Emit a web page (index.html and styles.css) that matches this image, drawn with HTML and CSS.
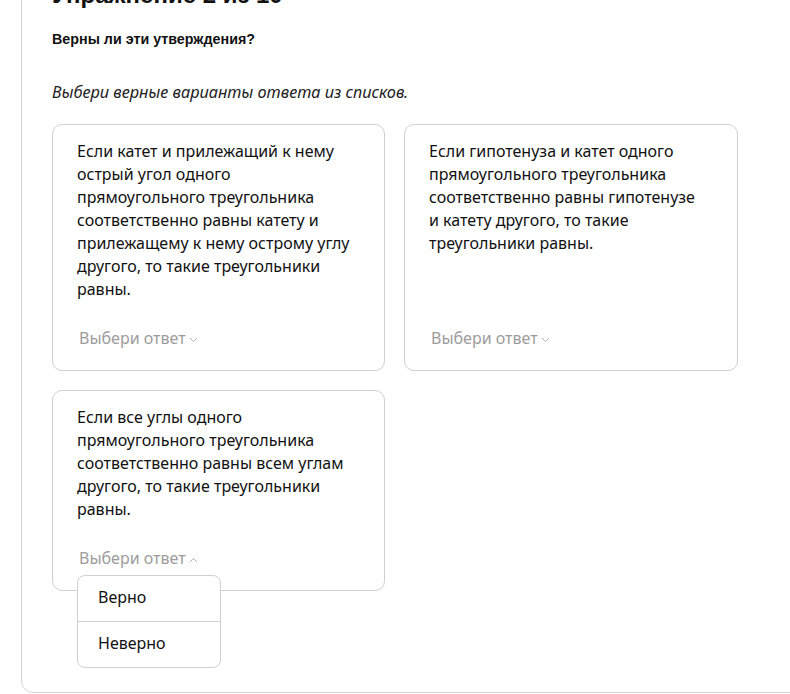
FILE: index.html
```html
<!DOCTYPE html>
<html>
<head>
<title>Упражнение</title>
<link rel="stylesheet" href="styles.css">
</head>
<body>

<div class="panel">
  <h2 class="title">Упражнение 2 из 10</h2>
  <p class="question">Верны ли эти утверждения?</p>
  <p class="hint">Выбери верные варианты ответа из списков.</p>

  <div class="cards">
    <div class="card">
      <p class="statement">Если катет и прилежащий к нему острый угол одного прямоугольного треугольника соответственно равны катету и прилежащему к нему острому углу другого, то такие треугольники равны.</p>
      <div class="select">
        <span>Выбери ответ</span>
        <svg class="chevron" width="9" height="6" viewBox="0 0 9 6"><polyline points="1,1 4.5,4.5 8,1" fill="none" stroke="#b4b4b4" stroke-width="1"/></svg>
      </div>
    </div>

    <div class="card">
      <p class="statement">Если гипотенуза и катет одного прямоугольного треугольника соответственно равны гипотенузе и катету другого, то такие треугольники равны.</p>
      <div class="select">
        <span>Выбери ответ</span>
        <svg class="chevron" width="9" height="6" viewBox="0 0 9 6"><polyline points="1,1 4.5,4.5 8,1" fill="none" stroke="#b4b4b4" stroke-width="1"/></svg>
      </div>
    </div>

    <div class="card">
      <p class="statement">Если все углы одного прямоугольного треугольника соответственно равны всем углам другого, то такие треугольники равны.</p>
      <div class="select open">
        <span>Выбери ответ</span>
        <svg class="chevron" width="9" height="6" viewBox="0 0 9 6"><polyline points="1,5 4.5,1.5 8,5" fill="none" stroke="#b4b4b4" stroke-width="1"/></svg>
        <div class="menu">
          <div class="menu-item">Верно</div>
          <div class="menu-item">Неверно</div>
        </div>
      </div>
    </div>
  </div>
</div>

</body>
</html>
```

FILE: styles.css
```css
body {
  margin: 0;
  overflow: hidden;
  background-color: white;
  color: #111;
  font-family: "Noto Sans", "Open Sans", sans-serif;
}

.panel {
  margin: -20px -20px 0 21px;
  border: 1px solid #d4d4d4;
  border-radius: 12px;
  padding: 0 0 101px 30px;
}

.title {
  margin: 0 0 20px 0;
  font-family: "Liberation Sans", Arial, sans-serif;
  font-size: 24px;
  line-height: 28px;
  font-weight: bold;
}

.question {
  margin: 0;
  font-family: "Liberation Sans", Arial, sans-serif;
  font-size: 14.3px;
  line-height: 20px;
  font-weight: bold;
}

.hint {
  margin: 32px 0 21px 0;
  font-style: italic;
  font-size: 16.3px;
  line-height: 22px;
  color: #222;
}

.cards {
  display: grid;
  grid-template-columns: 333px 334px;
  gap: 19px;
}

.card {
  display: flex;
  flex-direction: column;
  border: 1px solid #d0d0d0;
  border-radius: 10px;
  padding: 15px 30px 20px 24px;
}

.statement {
  margin: 0 0 26px 0;
  font-size: 16px;
  line-height: 23px;
}

.select {
  position: relative;
  margin-top: auto;
  padding-left: 2px;
  display: flex;
  align-items: center;
  gap: 3px;
  font-size: 16px;
  line-height: 23px;
  color: #9c9c9c;
}

.chevron {
  margin-top: 2px;
}

.menu {
  position: absolute;
  left: 0;
  top: 28px;
  width: 142px;
  background-color: white;
  border: 1px solid #d0d0d0;
  border-radius: 8px;
  z-index: 2;
}

.menu-item {
  padding: 10px 20px 12px 20px;
  color: #111;
  font-size: 16px;
  line-height: 23px;
}

.menu-item + .menu-item {
  border-top: 1px solid #d0d0d0;
}
```
